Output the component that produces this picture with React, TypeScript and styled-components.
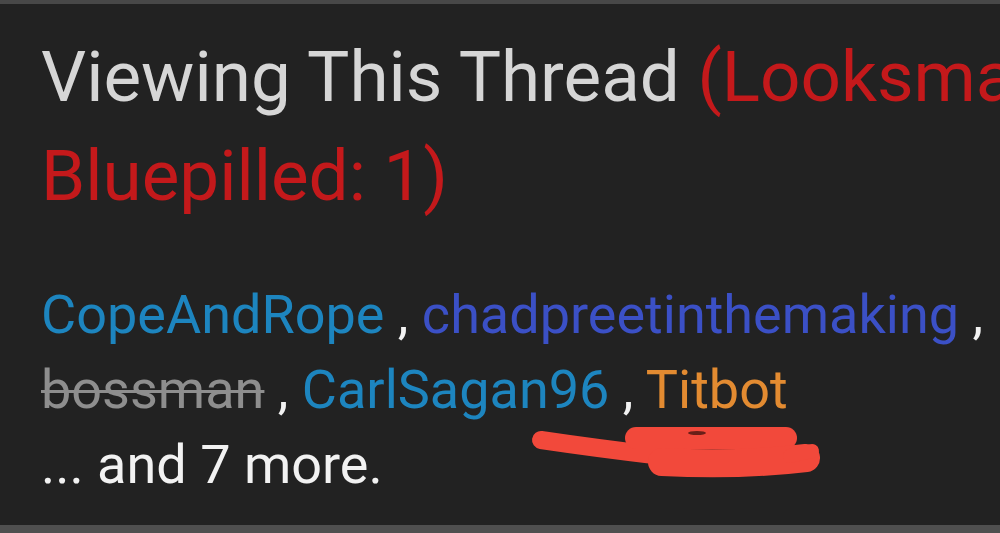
import styled, { createGlobalStyle } from "styled-components";

const GlobalStyle = createGlobalStyle`
  html, body {
    margin: 0;
    padding: 0;
    background: #222222;
    overflow: hidden;
  }
`;

const users = [
  { name: "CopeAndRope", color: "#1d85bf" },
  { name: "chadpreetinthemaking", color: "#3b50c6", breakAfter: true },
  { name: "bossman", color: "#8e8e8e", banned: true },
  { name: "CarlSagan96", color: "#1d85bf" },
  { name: "Titbot", color: "#e38b31", last: true },
];

const Frame = styled.div`
  position: relative;
  width: 1000px;
  height: 533px;
  box-sizing: border-box;
  background: #222222;
  border-top: 4px solid #484848;
  border-bottom: 8px solid #4f4f4f;
  overflow: hidden;
  font-family: Roboto, "Liberation Sans", sans-serif;
`;

const Block = styled.div`
  padding: 23px 0 0 41px;
`;

const Title = styled.h3`
  margin: 0;
  font-size: 71px;
  font-weight: 400;
  line-height: 99px;
  color: #d6d6d6;
  white-space: nowrap;
`;

const Count = styled.span`
  color: #c4191b;
`;

const List = styled.div`
  margin-top: 52px;
  font-size: 54px;
  line-height: 75px;
  color: #f2f2f2;
  white-space: nowrap;
`;

const User = styled.span<{ $color: string; $banned?: boolean }>`
  color: ${(p) => p.$color};
  text-decoration: ${(p) => (p.$banned ? "line-through" : "none")};
  text-decoration-thickness: 3px;
`;

// marker scribble drawn over the screenshot
const Scribble = styled.svg`
  position: absolute;
  left: 0;
  top: -4px;
  pointer-events: none;
`;

export default function App() {
  return (
    <>
      <GlobalStyle />
      <Frame>
        <Block>
          <Title>
            Viewing This Thread <Count>(Looksmaxxed: 4, Normies: 6,</Count>
            <br />
            <Count>Bluepilled: 1)</Count>
          </Title>
          <List>
            {users.map((u) => (
              <span key={u.name}>
                <User $color={u.color} $banned={u.banned}>
                  {u.name}
                </User>
                {!u.last && " , "}
                {u.breakAfter && <br />}
              </span>
            ))}
            <br />
            ... and 7 more.
          </List>
        </Block>
        <Scribble width="1000" height="533" viewBox="0 0 1000 533">
          <g
            stroke="#f2493b"
            strokeLinecap="round"
            strokeLinejoin="round"
            fill="none"
          >
            <path d="M541 440 Q595 448 662 456" strokeWidth="18" />
            <path d="M636 438 L786 438" strokeWidth="22" />
            <path d="M662 462 Q740 466 806 458" strokeWidth="28" />
            <path d="M790 456 L812 451" strokeWidth="14" />
          </g>
          <ellipse cx="697" cy="433" rx="9" ry="2" fill="#6a1f18" />
        </Scribble>
      </Frame>
    </>
  );
}
